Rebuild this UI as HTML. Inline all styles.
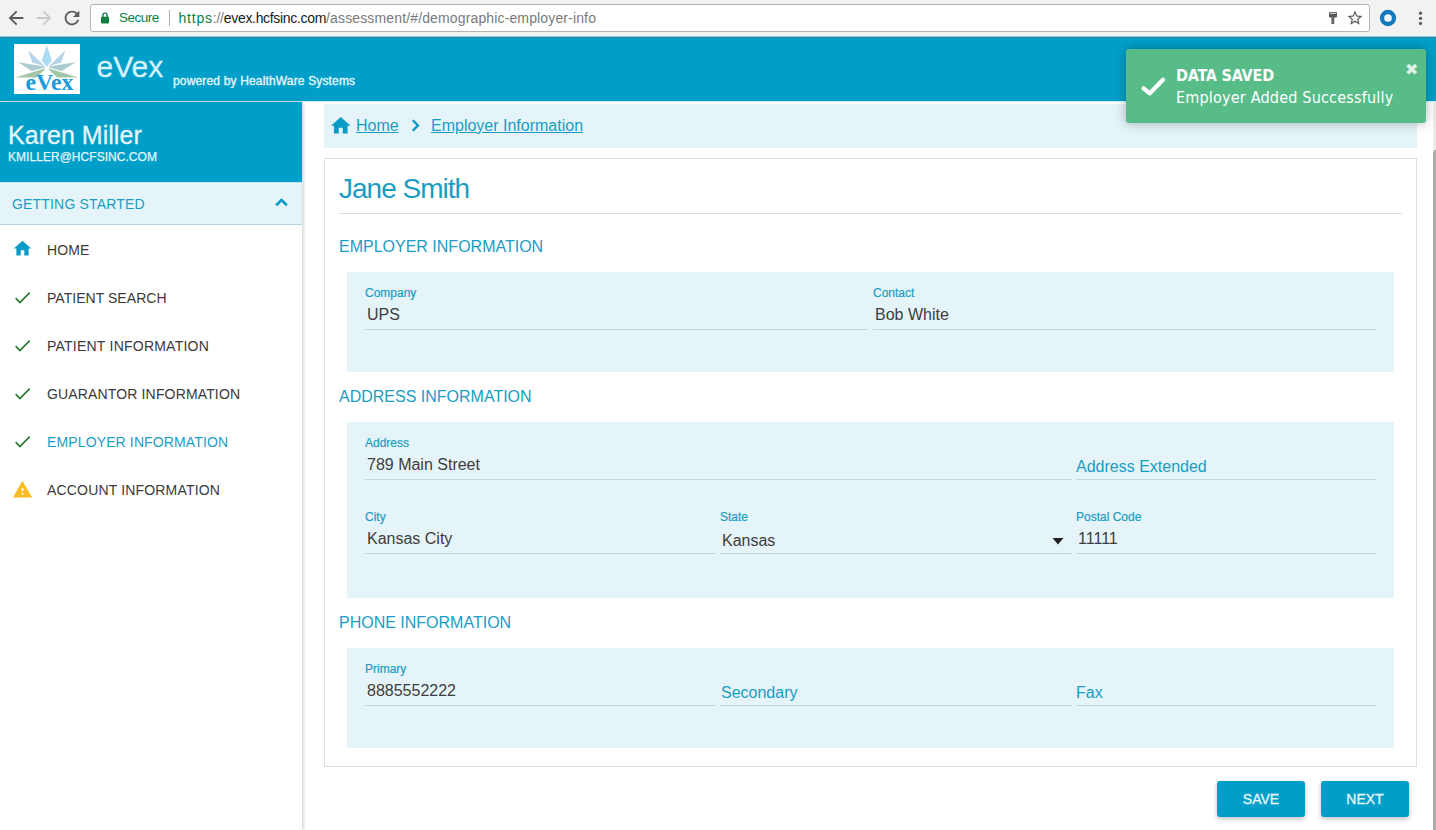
<!DOCTYPE html>
<html lang="en">
<head>
<meta charset="utf-8">
<title>eVex - Employer Information</title>
<style>
*{box-sizing:border-box;margin:0;padding:0}
html,body{width:1436px;height:830px;overflow:hidden;background:#fff}
body{font-family:"Liberation Sans",Arial,sans-serif;color:#333;position:relative}
.abs{position:absolute;white-space:nowrap}
/* browser chrome */
#chrome{left:0;top:0;width:1436px;height:36px;background:#f2f2f2}
#urlbox{left:90px;top:4px;width:1280px;height:28px;background:#fff;border:1px solid #b4b4b4;border-radius:3px}
.ui{font-family:"Liberation Sans","DejaVu Sans",sans-serif;font-size:14px;line-height:16px}
/* header */
#hdr{left:0;top:36px;width:1436px;height:65px;background:#009fc9}
#hdrline{left:0;top:101px;width:1436px;height:1px;background:#c6f4fa}
#logo{left:14px;top:44px;width:66px;height:50px;background:#fff}
#brand{-webkit-text-stroke:.3px #d6f3fb;left:96.500px;top:49px;font-size:30px;line-height:36px;color:#d6f3fb}
#powered{-webkit-text-stroke:.35px #e6f7fc;left:173px;top:73.500px;font-size:12px;line-height:14px;color:#e6f7fc;letter-spacing:.16px}
/* sidebar */
#side{left:0;top:102px;width:302px;height:728px;background:#fff;box-shadow:1px 0 4px rgba(0,0,0,.22)}
#user{left:0;top:102px;width:302px;height:80px;background:#009fc9}
#uname{-webkit-text-stroke:.3px #e3f6fc;letter-spacing:.03px;left:8px;top:121px;font-size:25px;line-height:28px;color:#e3f6fc}
#umail{-webkit-text-stroke:.25px #e3f6fc;letter-spacing:.04px;left:8px;top:150px;font-size:12px;line-height:14px;color:#e3f6fc}
#gs{left:0;top:182px;width:302px;height:43px;background:#e5f4f9;border-bottom:1px solid #b9d3df;border-top:1px solid #c9e6f0}
#gstxt{left:12px;top:196px;font-size:14px;line-height:16px;color:#1b9cc4;letter-spacing:.18px}
.nav{left:47px;font-size:14px;line-height:16px;color:#3a3a3a}
/* main */
#crumb{left:324px;top:104px;width:1093px;height:43.600px;background:#e5f4f9}
.lnk{font-size:16px;line-height:18px;color:#1b9cc4;text-decoration:underline}
#card{left:324px;top:158px;width:1093px;height:609px;background:#fff;border:1px solid #e0e0e0}
#title{left:339px;top:173px;font-size:28px;line-height:32px;color:#1b9cc4;letter-spacing:-1px}
#hr{left:339px;top:213px;width:1063px;height:1px;background:#ddd}
.sec{left:339px;font-size:16px;line-height:18px;color:#1b9cc4}
.panel{left:347px;width:1047px;background:#e5f4f9}
.lbl{font-size:12px;line-height:14px;color:#1b9cc4;-webkit-text-stroke:.2px #1b9cc4}
.val{font-size:16px;line-height:18px;color:#3d3d3d}
.ph{font-size:16px;line-height:18px;color:#1b9cc4}
.ul{height:1px;background:#c5d5da}
.btn{-webkit-text-stroke:.3px #e6f7fc;top:781px;width:88px;height:36px;background:#009fc9;border-radius:3px;color:#e6f7fc;font-size:14px;line-height:36px;text-align:center;box-shadow:0 2px 5px rgba(0,0,0,.25)}
/* toast */
#toast{left:1126px;top:49px;width:300px;height:73.500px;background:#58bc88;border-radius:3px;box-shadow:0 0 12px rgba(0,0,0,.3)}
.tt{font-family:"DejaVu Sans Condensed","DejaVu Sans","Liberation Sans",sans-serif;font-stretch:condensed;color:#fff;font-size:16px;line-height:20px}
/* scrollbar */
#sbtrack{left:1433px;top:102px;width:3px;height:728px;background:#e9e9e9;border-left:1px solid #f0f0f0}
#sbthumb{left:1433px;top:150px;width:6px;height:690px;background:#ababab;border-radius:3px}
</style>
</head>
<body>

<!-- Browser chrome -->
<div id="chrome" class="abs"></div>
<div id="urlbox" class="abs"></div>
<svg class="abs" style="left:5px;top:7px" width="22" height="22" viewBox="0 0 24 24"><path fill="#5a5a5a" d="M20 11H7.83l5.59-5.59L12 4l-8 8 8 8 1.41-1.41L7.83 13H20v-2z"/></svg>
<svg class="abs" style="left:33px;top:7px" width="22" height="22" viewBox="0 0 24 24"><path fill="#cacaca" d="M12 4l-1.41 1.41L16.17 11H4v2h12.17l-5.58 5.59L12 20l8-8z"/></svg>
<svg class="abs" style="left:61px;top:7px" width="22" height="22" viewBox="0 0 24 24"><path fill="#5a5a5a" d="M17.65 6.35C16.2 4.9 14.21 4 12 4c-4.42 0-7.99 3.58-7.99 8s3.57 8 7.99 8c3.73 0 6.84-2.55 7.73-6h-2.08c-.82 2.33-3.04 4-5.65 4-3.31 0-6-2.69-6-6s2.690-6 6-6c1.660 0 3.140.69 4.220 1.780L13 11h7V4l-2.350 2.350z"/></svg>
<svg class="abs" style="left:101px;top:11.500px" width="8" height="12" viewBox="0 0 8 12"><rect x="0" y="4.800" width="8" height="6.700" rx=".800" fill="#0b8043"/><path fill="none" stroke="#0b8043" stroke-width="1.400" d="M1.900 5.200V3.200a2.100 2.100 0 0 1 4.200 0V5.200"/></svg>
<div class="abs ui" style="left:119px;top:10px;color:#0b8043;font-size:13.500px;letter-spacing:-.48px">Secure</div>
<div class="abs" style="left:169px;top:10px;width:1px;height:16px;background:#b0b0b0"></div>
<div class="abs ui" id="url" style="left:178.500px;top:10px;color:#7a7a7a"><span style="color:#0b8043;letter-spacing:.78px">https</span><span style="letter-spacing:-.22px">://</span><span style="color:#1a1a1a;letter-spacing:-.32px">evex.hcfsinc.com</span><span style="letter-spacing:.14px">/assessment/#/demographic-employer-info</span></div>
<svg class="abs" style="left:1328px;top:11px" width="10" height="14" viewBox="0 0 10 14"><rect x="1" y="1" width="8" height="5.500" rx="1" fill="#5a5a5a"/><rect x="2" y="1.800" width="6" height="1.200" fill="#c8c8c8"/><rect x="3.400" y="6" width="2.800" height="7" fill="#5a5a5a"/><rect x="3.400" y="6" width="1" height="6.500" fill="#9a9a9a"/></svg>
<svg class="abs" style="left:1346px;top:9px" width="18" height="18" viewBox="0 0 24 24"><path fill="#5a5a5a" d="M22 9.240l-7.190-.62L12 2 9.190 8.630 2 9.240l5.460 4.730L5.820 21 12 17.270 18.180 21l-1.630-7.030L22 9.240zM12 15.400l-3.760 2.270 1-4.280-3.320-2.880 4.380-.38L12 6.100l1.710 4.040 4.380.38-3.320 2.880 1 4.280L12 15.400z"/></svg>
<svg class="abs" style="left:1379px;top:9px" width="18" height="18" viewBox="0 0 18 18"><circle cx="9" cy="9" r="6" fill="#eef5fb" stroke="#1378be" stroke-width="4.300"/></svg>
<svg class="abs" style="left:1417px;top:10px" width="7" height="17" viewBox="0 0 7 17"><circle cx="3.500" cy="3.200" r="1.600" fill="#5a5a5a"/><circle cx="3.500" cy="8.300" r="1.600" fill="#5a5a5a"/><circle cx="3.500" cy="13.400" r="1.600" fill="#5a5a5a"/></svg>

<!-- App header -->
<div id="hdr" class="abs"></div>
<div id="hdrline" class="abs"></div>
<div class="abs" style="left:0;top:35px;width:1436px;height:4px;background:linear-gradient(#e9f8fd 0,#e9f8fd 25%,#8ec8da 25%,#8ec8da 50%,#1f8aad 50%,#1f8aad 75%,#0c9ac3 75%)"></div>
<svg id="logo" class="abs" width="66" height="50" viewBox="0 0 66 50">
<rect width="66" height="50" fill="#fff"/>
<polygon points="32.800,.800 27.900,16.400 32.800,22.900 37.800,16.400" fill="#abdaf3"/>
<polygon points="14.200,6.200 18.300,18.500 30.800,22.300" fill="#b4d3e8"/>
<polygon points="51.400,6.200 47.300,18.500 34.800,22.300" fill="#b4d3e8"/>
<polygon points="4.100,18.300 17.900,26.900 30.600,23.500 30.600,22.600" fill="#aacbd0"/>
<polygon points="61.600,18.300 47.800,26.900 35,23.500 35,22.600" fill="#aacbd0"/>
<polygon points="1.500,33.600 22.400,33.600 31,25.500 30.600,24.500" fill="#a5c5a8"/>
<polygon points="64.200,33.600 43.300,33.600 34.700,25.500 35,24.500" fill="#a5c5a8"/>
<text x="11.500" y="46" font-family="'Liberation Serif','DejaVu Serif',serif" font-weight="bold" font-size="23" fill="#1a9cdc" textLength="48" lengthAdjust="spacingAndGlyphs">eVex</text>
</svg>
<div id="brand" class="abs">eVex</div>
<div id="powered" class="abs">powered by HealthWare Systems</div>

<!-- Main -->
<div id="crumb" class="abs"></div>
<svg class="abs" style="left:329.300px;top:114.100px" width="23.500" height="23.500" viewBox="0 0 24 24"><path fill="#0c9bc7" d="M10 20v-6h4v6h5v-8h3L12 3 2 12h3v8z"/></svg>
<svg class="abs" style="left:404.400px;top:114.350px" width="23" height="23" viewBox="0 0 24 24"><path stroke="#0c9bc7" stroke-width=".600" fill="#0c9bc7" d="M10 6L8.590 7.410 13.170 12l-4.580 4.590L10 18l6-6z"/></svg>
<div class="abs lnk" style="left:356px;top:117px">Home</div>
<div class="abs lnk" style="left:431px;top:117px">Employer Information</div>

<div id="card" class="abs"></div>
<div id="title" class="abs">Jane Smith</div>
<div id="hr" class="abs"></div>

<div class="abs sec" style="top:238px">EMPLOYER INFORMATION</div>
<div class="abs panel" style="top:272px;height:100px"></div>
<div class="abs lbl" style="left:365px;top:286px">Company</div>
<div class="abs val" style="left:367px;top:306px">UPS</div>
<div class="abs ul" style="left:365px;top:329px;width:503px"></div>
<div class="abs lbl" style="left:873px;top:286px">Contact</div>
<div class="abs val" style="left:875px;top:306px">Bob White</div>
<div class="abs ul" style="left:873px;top:329px;width:503px"></div>

<div class="abs sec" style="top:388px">ADDRESS INFORMATION</div>
<div class="abs panel" style="top:422px;height:176px"></div>
<div class="abs lbl" style="left:365px;top:436px">Address</div>
<div class="abs val" style="left:367px;top:456px">789 Main Street</div>
<div class="abs ul" style="left:365px;top:479px;width:707px"></div>
<div class="abs ph" style="left:1076px;top:458px">Address Extended</div>
<div class="abs ul" style="left:1076px;top:479px;width:300px"></div>

<div class="abs lbl" style="left:365px;top:510px">City</div>
<div class="abs val" style="left:367px;top:530px">Kansas City</div>
<div class="abs ul" style="left:365px;top:553px;width:351px"></div>
<div class="abs lbl" style="left:720px;top:510px">State</div>
<div class="abs val" style="left:722px;top:532px">Kansas</div>
<div class="abs ul" style="left:720px;top:553px;width:352px"></div>
<svg class="abs" style="left:1052px;top:537px" width="12" height="8" viewBox="0 0 12 8"><path fill="#222" d="M.500 1h11L6 7.500z"/></svg>
<div class="abs lbl" style="left:1076px;top:510px">Postal Code</div>
<div class="abs val" style="left:1078px;top:530px">11111</div>
<div class="abs ul" style="left:1076px;top:553px;width:300px"></div>

<div class="abs sec" style="top:614px">PHONE INFORMATION</div>
<div class="abs panel" style="top:648px;height:100px"></div>
<div class="abs lbl" style="left:365px;top:662px">Primary</div>
<div class="abs val" style="left:367px;top:682px">8885552222</div>
<div class="abs ul" style="left:365px;top:705px;width:351px"></div>
<div class="abs ph" style="left:721px;top:684px">Secondary</div>
<div class="abs ul" style="left:720px;top:705px;width:352px"></div>
<div class="abs ph" style="left:1076px;top:684px">Fax</div>
<div class="abs ul" style="left:1076px;top:705px;width:300px"></div>

<div class="abs btn" style="left:1217px">SAVE</div>
<div class="abs btn" style="left:1321px">NEXT</div>

<!-- Sidebar -->
<div id="side" class="abs"></div>
<div id="user" class="abs"></div>
<div id="uname" class="abs">Karen Miller</div>
<div id="umail" class="abs">KMILLER@HCFSINC.COM</div>
<div id="gs" class="abs"></div>
<div id="gstxt" class="abs">GETTING STARTED</div>
<div class="abs nav" style="top:242px;letter-spacing:0.1px">HOME</div>
<div class="abs nav" style="top:290px;letter-spacing:0.04px">PATIENT SEARCH</div>
<div class="abs nav" style="top:338px;letter-spacing:0.23px">PATIENT INFORMATION</div>
<div class="abs nav" style="top:386px;letter-spacing:0.15px">GUARANTOR INFORMATION</div>
<div class="abs nav" style="top:434px;color:#1b9cc4;letter-spacing:0.13px">EMPLOYER INFORMATION</div>
<div class="abs nav" style="top:482px;letter-spacing:0.17px">ACCOUNT INFORMATION</div>

<svg class="abs" style="left:270.050px;top:190.600px" width="23" height="23" viewBox="0 0 24 24"><path stroke="#0c9bc7" stroke-width="1" fill="#0c9bc7" d="M12 8l-6 6 1.410 1.410L12 10.830l4.590 4.580L18 14z"/></svg>
<svg class="abs" style="left:12px;top:238.400px" width="21" height="21" viewBox="0 0 24 24"><path fill="#0c9bc7" d="M10 20v-6h4v6h5v-8h3L12 3 2 12h3v8z"/></svg>
<svg class="abs" style="left:12px;top:286.500px" width="21" height="21" viewBox="0 0 24 24"><path fill="#2f7d32" d="M9 16.170L4.830 12l-1.420 1.410L9 19 21 7l-1.410-1.410z"/></svg>
<svg class="abs" style="left:12px;top:334.500px" width="21" height="21" viewBox="0 0 24 24"><path fill="#2f7d32" d="M9 16.170L4.830 12l-1.420 1.410L9 19 21 7l-1.410-1.410z"/></svg>
<svg class="abs" style="left:12px;top:382.500px" width="21" height="21" viewBox="0 0 24 24"><path fill="#2f7d32" d="M9 16.170L4.830 12l-1.420 1.410L9 19 21 7l-1.410-1.410z"/></svg>
<svg class="abs" style="left:12px;top:430.500px" width="21" height="21" viewBox="0 0 24 24"><path fill="#2f7d32" d="M9 16.170L4.830 12l-1.420 1.410L9 19 21 7l-1.410-1.410z"/></svg>
<svg class="abs" style="left:12px;top:478.700px" width="21" height="21" viewBox="0 0 24 24"><path fill="#fbbc22" d="M1 21h22L12 2 1 21zm12-3h-2v-2h2v2zm0-4h-2v-4h2v4z"/></svg>

<!-- scrollbar -->
<div id="sbtrack" class="abs"></div>
<div id="sbthumb" class="abs"></div>

<!-- Toast -->
<div id="toast" class="abs"></div>
<svg class="abs" style="left:1136px;top:72px" width="34" height="28" viewBox="0 0 34 28"><path fill="none" stroke="#fff" stroke-width="4.200" stroke-linecap="round" stroke-linejoin="round" d="M7.500 16.300L13.800 21.300 27 7.700"/></svg>
<div class="abs" style="left:1405px;top:60.500px;font-family:'DejaVu Sans',sans-serif;font-size:16px;line-height:18px;color:#fff;opacity:.8">&#10006;</div>
<div class="abs tt" style="left:1176px;top:66px;font-weight:bold;letter-spacing:-.2px">DATA SAVED</div>
<div class="abs tt" style="left:1176px;top:88px;letter-spacing:.2px">Employer Added Successfully</div>

</body>
</html>
